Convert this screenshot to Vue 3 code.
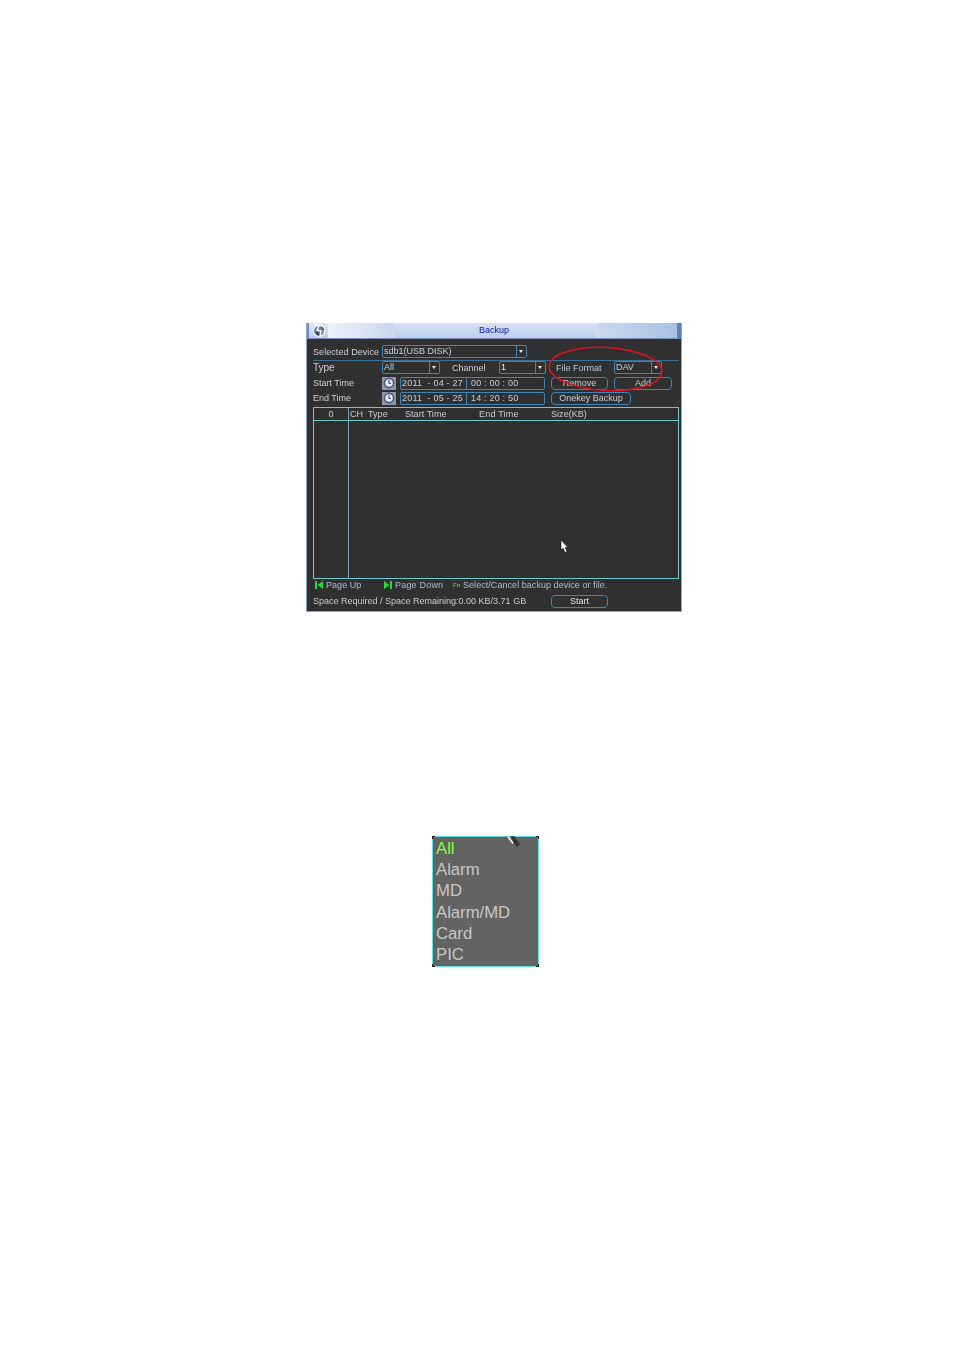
<template>
  <div class="page">
    <div class="dvr">
      <div class="titlebar">
        <div class="logo">
          <svg width="17" height="15" viewBox="0 0 17 15">
            <circle cx="9" cy="8" r="5.6" fill="#6c7f9e" stroke="#f0f4fa" stroke-width="1.3" />
            <path d="M4 1 L9 3 L7 7 L11 8 L10 13" fill="none" stroke="#fff" stroke-width="1.4" />
            <path d="M6 9 L9 12" stroke="#2a3650" stroke-width="1.5" />
            <path d="M12 4 L14 7" stroke="#2a3650" stroke-width="1" />
          </svg>
        </div>
        <div class="title-left"></div>
        <div class="title-tab">Backup</div>
        <div class="title-right"></div>
      </div>

      <div class="body">
        <div class="row device-row">
          <span class="label device-label">Selected Device</span>
          <div class="select device-select">
            <span class="select-text">sdb1(USB DISK)</span>
            <span class="arrow"></span>
          </div>
        </div>
        <div class="divider"></div>

        <div class="row type-row">
          <span class="label type-label">Type</span>
          <div class="select type-select">
            <span class="select-text">All</span>
            <span class="arrow"></span>
          </div>
          <span class="channel-label">Channel</span>
          <div class="select channel-select">
            <span class="select-text bright">1</span>
            <span class="arrow"></span>
          </div>
          <span class="format-label">File Format</span>
          <div class="select format-select">
            <span class="select-text">DAV</span>
            <span class="arrow"></span>
          </div>
        </div>

        <div class="row time-row" v-for="r in timeRows" :key="r.label">
          <span class="label time-label">{{ r.label }}</span>
          <div class="clock">
            <svg width="12" height="12" viewBox="0 0 12 12">
              <circle cx="6" cy="6" r="4.6" fill="#e6ebf4" stroke="#4a5a7c" stroke-width="1.6" />
              <path d="M6 3 V6.4 H8" fill="none" stroke="#33415f" stroke-width="1" />
            </svg>
          </div>
          <div class="datetime">
            <span class="date">{{ r.date }}</span>
            <span class="time">{{ r.time }}</span>
          </div>
          <button v-for="b in r.buttons" :key="b.text" class="btn" :class="b.cls">{{ b.text }}</button>
        </div>

        <div class="table">
          <div class="thead">
            <span class="col-no">0</span>
            <span class="col-ch">CH</span>
            <span class="col-type">Type</span>
            <span class="col-start">Start Time</span>
            <span class="col-end">End Time</span>
            <span class="col-size">Size(KB)</span>
          </div>
          <div class="tbody">
            <div class="tbody-no"></div>
          </div>
          <svg class="cursor" width="10" height="14" viewBox="0 0 10 14">
            <path d="M1 0 V10 L3.2 8.2 L5 12.5 L7 11.6 L5.2 7.6 H8 Z" fill="#fff" stroke="#111" stroke-width="0.6" />
          </svg>
        </div>

        <div class="hints">
          <span class="hint page-up"><i class="key">
            <svg width="8" height="8" viewBox="0 0 8 8"><path d="M0 0H2V8H0ZM8 0V8L2.5 4Z" fill="#2fd23a" /></svg>
          </i>Page Up</span>
          <span class="hint page-down"><i class="key">
            <svg width="8" height="8" viewBox="0 0 8 8"><path d="M0 0L5.5 4L0 8ZM6 0H8V8H6Z" fill="#2fd23a" /></svg>
          </i>Page Down</span>
          <span class="hint select-hint"><i class="fn">Fn</i>Select/Cancel backup device or file.</span>
        </div>

        <div class="row status-row">
          <span class="space-text">Space Required / Space Remaining:0.00 KB/3.71 GB</span>
          <button class="btn start-btn">Start</button>
        </div>
      </div>

      <svg class="ellipse" width="118" height="48" viewBox="0 0 118 48">
        <ellipse cx="58.5" cy="24" rx="56.5" ry="21.5" fill="none" stroke="#e3101c" stroke-width="1.5" transform="rotate(3 58.5 24)" />
      </svg>
    </div>

    <div class="dropdown">
      <div v-for="(o, i) in typeOptions" :key="o" class="option" :class="{ active: i === 0 }">{{ o }}</div>
      <svg class="drop-cursor" width="16" height="12" viewBox="0 0 16 12">
        <path d="M6 0 L9 0 L15 8 L12 11 L8 6 Z" fill="#333" />
        <path d="M1 0 H4 L9 7 L7.5 8.5 Z" fill="#fff" stroke="#222" stroke-width="0.5" />
      </svg>
      <i class="corner tl"></i><i class="corner tr"></i><i class="corner bl"></i><i class="corner br"></i>
    </div>
  </div>
</template>

<script setup>
const timeRows = [
  {
    label: 'Start Time',
    date: '2011  - 04 - 27',
    time: '00 : 00 : 00',
    buttons: [
      { text: 'Remove', cls: 'remove-btn' },
      { text: 'Add', cls: 'add-btn' },
    ],
  },
  {
    label: 'End Time',
    date: '2011  - 05 - 25',
    time: '14 : 20 : 50',
    buttons: [{ text: 'Onekey Backup', cls: 'onekey-btn' }],
  },
]

const typeOptions = ['All', 'Alarm', 'MD', 'Alarm/MD', 'Card', 'PIC']
</script>

<style>
html, body { margin: 0; background: #fff; }
</style>

<style scoped>
.page {
  width: 954px;
  height: 1350px;
  padding-top: 323px;
  box-sizing: border-box;
  font-family: "Liberation Sans", Arial, sans-serif;
  overflow: hidden;
}

/* the reference is a scanned, slightly soft picture */
.dvr {
  position: relative;
  width: 376px;
  height: 289px;
  margin-left: 306px;
  box-sizing: border-box;
  background: #303030;
  border: 1px solid #8ea3c9;
  border-top: none;
  color: #c9ced6;
  font-size: 9px;
  display: flex;
  flex-direction: column;
  filter: blur(0.3px);
}

.titlebar {
  height: 16px;
  display: flex;
  background: linear-gradient(#dfe8f7, #b9cbeb);
  border-right: 4px solid #5f7fb0;
  border-left: 2px solid #6f8dbd;
  border-bottom: 1px solid #7d93b8;
  box-sizing: border-box;
  flex: none;
}
.logo { width: 19px; display: flex; align-items: center; justify-content: center; }
.title-left { width: 65px; background: linear-gradient(90deg, #edf2fa, #c9d8f0); }
.title-tab {
  flex: none;
  width: 204px;
  padding-right: 2px;
  text-align: center;
  line-height: 15px;
  color: #10109a;
  background: linear-gradient(#d8e3f5, #bccdeb);
  border-left: 1px solid #d6dff0;
  border-right: 1px solid #d6dff0;
  box-sizing: border-box;
}
.title-right { flex: 1; background: linear-gradient(90deg, #c9d8f0, #aac0e4); }

.body {
  flex: 1;
  padding: 5px 2px 0 6px;
  display: flex;
  flex-direction: column;
}

.row { display: flex; align-items: center; }
.label { width: 69px; flex: none; white-space: nowrap; }
.device-row { height: 14px; }
.device-label { margin-top: 2px; letter-spacing: 0.07px; }

.select {
  box-sizing: border-box;
  height: 13px;
  display: flex;
  border: 1px solid #3f86b8;
  border-radius: 2px;
  background: #303030;
  flex: none;
}
.select-text {
  flex: 1;
  padding-left: 1px;
  line-height: 11px;
  white-space: nowrap;
  overflow: hidden;
}
.bright { color: #f0f0f0; }
.arrow {
  width: 9px;
  border-left: 1px solid #3f86b8;
  position: relative;
}
.arrow::after {
  content: "";
  position: absolute;
  left: 2px;
  top: 4px;
  border: 2.5px solid transparent;
  border-top: 3px solid #e8e8e8;
  border-bottom: none;
}
.device-select { width: 145px; }

.divider {
  height: 1px;
  background: #3a6f96;
  margin: 2px 0 0 0;
}

.type-row { height: 13px; margin-bottom: 1px; }
.type-label { margin-top: -1px; font-size: 10px; }
.type-select { width: 58px; }
.channel-label { width: 47px; margin-left: 12px; flex: none; }
.channel-select { width: 47px; }
.format-label { width: 58px; margin-left: 10px; flex: none; color: #b9c6dc; }
.format-select { width: 48px; }

.time-row { height: 14px; margin-top: 1px; }
.time-label { width: 69px; }
.clock {
  width: 14px;
  height: 13px;
  flex: none;
  background: #8c98ae;
  display: flex;
  align-items: center;
  justify-content: center;
}
.datetime {
  box-sizing: border-box;
  width: 145px;
  height: 13px;
  margin-left: 4px;
  display: flex;
  border: 1px solid #3f86b8;
  border-radius: 2px;
  line-height: 11px;
  white-space: pre;
  flex: none;
  letter-spacing: 0.2px;
}
.date { width: 66px; padding-left: 1px; border-right: 1px solid #3f86b8; flex: none; box-sizing: border-box; }
.time { padding-left: 4px; }

.btn {
  box-sizing: border-box;
  height: 13px;
  padding: 0;
  background: #303030;
  color: #c9ced6;
  border: 1px solid #3f86b8;
  border-radius: 4px;
  font: 9px/11px "Liberation Sans", Arial, sans-serif;
  flex: none;
}
.remove-btn { width: 57px; margin-left: 6px; }
.add-btn { width: 58px; margin-left: 6px; }
.onekey-btn { width: 80px; margin-left: 6px; }

.table {
  position: relative;
  box-sizing: border-box;
  height: 172px;
  margin-top: 2px;
  border: 1px solid #6fc9cb;
  flex: none;
  display: flex;
  flex-direction: column;
}
.thead {
  height: 12px;
  line-height: 13px;
  display: flex;
  border-bottom: 1px solid #6fc9cb;
  flex: none;
  white-space: nowrap;
  letter-spacing: 0.05px;
}
.col-no { width: 34px; text-align: center; border-right: 1px solid #7f9cc4; flex: none; }
.col-ch { width: 19px; padding-left: 1px; flex: none; box-sizing: border-box; }
.col-type { width: 37px; flex: none; }
.col-start { width: 74px; flex: none; }
.col-end { width: 72px; flex: none; letter-spacing: 0.2px; }
.col-size { flex: none; }
.tbody { flex: 1; display: flex; }
.tbody-no { width: 34px; border-right: 1px solid #7f9cc4; }
.cursor { position: absolute; left: 246px; top: 132px; }

.hints {
  height: 12px;
  display: flex;
  align-items: center;
  padding-left: 2px;
  color: #a9bcdc;
  flex: none;
  letter-spacing: 0.05px;
}
.hint { display: flex; align-items: center; white-space: nowrap; flex: none; }
.key { display: flex; width: 11px; font-style: normal; }
.fn {
  width: 10px;
  font: bold 6px/8px "Liberation Sans", Arial, sans-serif;
  color: #2fd23a;
}
.page-up { width: 69px; }
.page-down { width: 69px; letter-spacing: 0.2px; }

.status-row { height: 14px; margin-top: 3px; }
.space-text { width: 238px; flex: none; white-space: nowrap; }
.start-btn { width: 57px; color: #e4e4e4; }

.ellipse { position: absolute; left: 240px; top: 22px; pointer-events: none; }

.dropdown {
  position: relative;
  box-sizing: border-box;
  width: 107px;
  height: 131px;
  margin: 224px 0 0 432px;
  padding: 1px 0 0 3px;
  background: #636363;
  border: 1px solid #62e0e6;
  font-size: 16.7px;
  color: #c8c8c8;
}
.option { height: 21.2px; line-height: 21px; }
.option.active { color: #7dff3c; }
.drop-cursor { position: absolute; left: 72px; top: -1px; }
.corner { position: absolute; width: 2px; height: 2px; border: 0 solid #222; }
.tl { left: -1px; top: -1px; border-width: 1px 0 0 1px; }
.tr { right: -1px; top: -1px; border-width: 1px 1px 0 0; }
.bl { left: -1px; bottom: -1px; border-width: 0 0 1px 1px; }
.br { right: -1px; bottom: -1px; border-width: 0 1px 1px 0; }
</style>
